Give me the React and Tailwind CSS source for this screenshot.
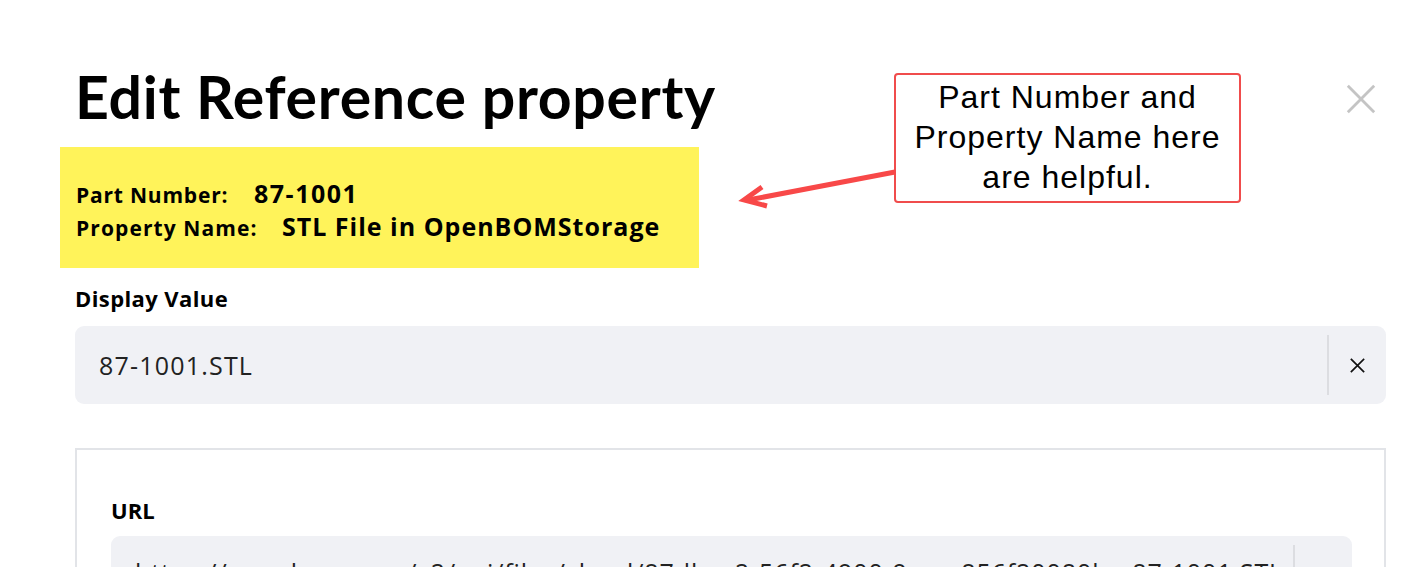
import React from "react";

const HEAD = { fontFamily: "Lato, 'Noto Sans', sans-serif" };
const BODY = { fontFamily: "'Open Sans', 'Noto Sans', sans-serif" };

function CloseX({ className, width = 3 }) {
  return (
    <svg viewBox="0 0 32 32" className={className} fill="none" stroke="currentColor" strokeWidth={width} strokeLinecap="square">
      <path d="M3 3 L29 29 M29 3 L3 29" />
    </svg>
  );
}

export default function App() {
  return (
    <div className="relative w-[1415px] h-[567px] overflow-hidden bg-white text-black" style={BODY}>
      <div className="pl-[75px] pr-[29px] pt-[62px]">
        {/* Header */}
        <div className="flex items-start justify-between">
          <h1 className="text-[59px] leading-[70px] font-bold tracking-[0.7px]" style={HEAD}>
            Edit Reference property
          </h1>
          <button className="mt-[22px] mr-[10px] text-[#c4c4c4]">
            <CloseX className="w-[30px] h-[30px]" />
          </button>
        </div>

        {/* Highlighted info */}
        <div className="ml-[-15px] mt-[15px] w-[639px] h-[121px] bg-[#fff35a] pl-[16px] pt-[31px]">
          <div className="flex items-baseline leading-[31px]">
            <span className="w-[178px] text-[21px] font-bold tracking-[0.8px]">Part Number:</span>
            <span className="text-[25px] font-bold tracking-[1.5px]">87-1001</span>
          </div>
          <div className="flex items-baseline leading-[31px]">
            <span className="w-[206px] text-[21px] font-bold tracking-[1.1px]">Property Name:</span>
            <span className="text-[25px] font-bold tracking-[1px]">STL File in OpenBOMStorage</span>
          </div>
        </div>

        {/* Display Value */}
        <div className="mt-[16px] text-[22px] font-bold leading-[28px] tracking-[0.4px]">Display Value</div>
        <div className="mt-[14px] h-[78px] rounded-[9px] bg-[#f0f1f5] flex items-center">
          <div className="flex-1 pl-[24px] text-[25px] leading-[34px] tracking-[1.2px] text-[#222]">87-1001.STL</div>
          <div className="w-[2px] h-[60px] bg-[#dcdde1]" />
          <div className="w-[57px] flex justify-center text-[#111]">
            <CloseX className="w-[15px] h-[15px]" width={3.5} />
          </div>
        </div>

        {/* URL panel */}
        <div className="mt-[44px] h-[200px] border-2 border-b-0 border-[#e2e4e8] pl-[34px] pr-[32px] pt-[46px]">
          <div className="text-[22px] font-bold leading-[28px]">URL</div>
          <div className="mt-[12px] h-[78px] rounded-[9px] bg-[#f0f1f5] flex items-start">
            <div className="flex-1 min-w-0 pl-[24px] pt-[19px] text-[25px] leading-[34px] tracking-[0.9px] text-[#222] whitespace-nowrap overflow-hidden">
              https://openbom.com/v2/api/files/cloud/87dbec2-56f2-4900-9aea-856f20080be-87-1001.STL
            </div>
            <div className="mt-[9px] w-[2px] h-[60px] bg-[#dcdde1]" />
            <div className="w-[57px]" />
          </div>
        </div>
      </div>

      {/* Annotation callout */}
      <div
        className="absolute left-[894px] top-[73px] w-[347px] h-[130px] border-2 border-[#f04c4c] rounded-[4px] bg-white flex flex-col items-center pt-[2px] text-center text-[32px] leading-[40px] tracking-[1px] text-black"
        style={{ fontFamily: "'Liberation Sans', Arial, sans-serif" }}
      >
        <div>Part Number and</div>
        <div>Property Name here</div>
        <div>are helpful.</div>
      </div>
      <svg className="absolute left-0 top-0 pointer-events-none" width="1415" height="567">
        <line x1="895" y1="172" x2="748" y2="200" stroke="#f84848" strokeWidth="5" />
        <path d="M762 187 L744 200 L767 206" fill="none" stroke="#f84848" strokeWidth="5" strokeLinejoin="miter" />
      </svg>
    </div>
  );
}
